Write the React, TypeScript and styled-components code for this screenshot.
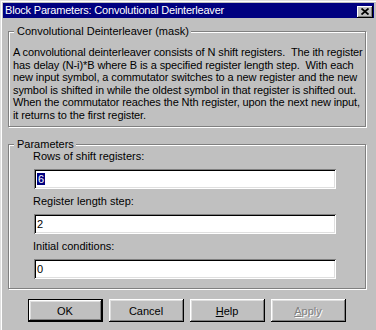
import styled, { createGlobalStyle } from "styled-components";

const GlobalStyle = createGlobalStyle`
  html, body {
    margin: 0;
    padding: 0;
    background: #c0c0c0;
  }
  * {
    box-sizing: border-box;
  }
`;

const description = [
  "A convolutional deinterleaver consists of N shift registers.  The ith register",
  "has delay (N-i)*B where B is a specified register length step.  With each",
  "new input symbol, a commutator switches to a new register and the new",
  "symbol is shifted in while the oldest symbol in that register is shifted out.",
  "When the commutator reaches the Nth register, upon the next new input,",
  "it returns to the first register."
];

export default function App() {
  return (
    <>
      <GlobalStyle />
      <Window>
        <TitleBar>
          <TitleText>Block Parameters: Convolutional Deinterleaver</TitleText>
          <CloseButton aria-label="Close">
            <svg width="8" height="7" viewBox="0 0 8 7">
              <path
                d="M0.5 0.5 L7.5 6.5 M7.5 0.5 L0.5 6.5"
                stroke="#000"
                strokeWidth="1.8"
                fill="none"
              />
            </svg>
          </CloseButton>
        </TitleBar>

        <Body>
          <GroupBox $top={7}>
            <Legend>Convolutional Deinterleaver (mask)</Legend>
            <Description>
              {description.map((line) => (
                <Line key={line}>{line}</Line>
              ))}
            </Description>
          </GroupBox>

          <GroupBox $top={11}>
            <Legend>Parameters</Legend>
            <ParamList>
              <Label>Rows of shift registers:</Label>
              <Edit>
                <Selected>6</Selected>
              </Edit>
              <Label>Register length step:</Label>
              <Edit>2</Edit>
              <Label>Initial conditions:</Label>
              <Edit>0</Edit>
            </ParamList>
          </GroupBox>

          <ButtonRow>
            <Button $default>OK</Button>
            <Button>Cancel</Button>
            <Button>
              <u>H</u>elp
            </Button>
            <Button disabled>
              <u>A</u>pply
            </Button>
          </ButtonRow>
        </Body>
      </Window>
    </>
  );
}

const Window = styled.div`
  width: 376px;
  height: 330px;
  padding: 3px 2px 0 3px;
  background: #c0c0c0;
  box-shadow: inset 1px 1px 0 #dfdfdf, inset 2px 2px 0 #ffffff;
  font-family: "Liberation Sans", Arial, sans-serif;
  font-size: 11px;
  color: #000;
  display: flex;
  flex-direction: column;
  overflow: hidden;
`;

const TitleBar = styled.div`
  height: 15px;
  flex-shrink: 0;
  background: #000080;
  color: #fff;
  display: flex;
  align-items: center;
  justify-content: space-between;
  padding: 0 1px 0 2px;
`;

const TitleText = styled.span`
  font-size: 11px;
  letter-spacing: -0.2px;
  line-height: 15px;
  white-space: nowrap;
`;

const CloseButton = styled.button`
  width: 16px;
  height: 12px;
  margin-top: 2px;
  padding: 0;
  border: none;
  background: #c0c0c0;
  box-shadow: inset -1px -1px 0 #000, inset 1px 1px 0 #fff,
    inset -2px -2px 0 #808080;
  display: flex;
  align-items: center;
  justify-content: center;
`;

const Body = styled.div`
  padding: 0 8px 0 5px;
  display: flex;
  flex-direction: column;
`;

const GroupBox = styled.fieldset<{ $top: number }>`
  margin: ${(p) => p.$top}px 0 0 0;
  padding: 0;
  min-width: 0;
  border: 1px solid #808080;
  box-shadow: inset 1px 1px 0 #fff, 1px 1px 0 #fff;
`;

const Legend = styled.legend`
  margin-left: 5px;
  padding: 0 2px 0 3px;
  line-height: 13px;
  background: #c0c0c0;
  white-space: nowrap;
`;

const Description = styled.div`
  padding: 8px 4px 5px 4px;
  letter-spacing: -0.1px;
`;

const Line = styled.div`
  white-space: pre;
  line-height: 12.5px;
`;

const ParamList = styled.div`
  margin-top: -1px;
  padding: 0 0 9px 24px;
  display: flex;
  flex-direction: column;
`;

const Label = styled.div`
  line-height: 13px;
  margin: 6px 0;
  &:first-child {
    margin-top: 0;
  }
`;

const Edit = styled.div`
  width: 302px;
  height: 20px;
  margin-left: 1px;
  padding: 0 3px;
  background: #fff;
  line-height: 20px;
  box-shadow: inset 1px 1px 0 #808080, inset -1px -1px 0 #fff,
    inset 2px 2px 0 #000, inset -2px -2px 0 #dfdfdf;
`;

const Selected = styled.span`
  background: #000080;
  color: #fff;
  padding: 0 1px;
`;

const ButtonRow = styled.div`
  margin-top: 10px;
  display: flex;
  justify-content: center;
  gap: 6px;
  padding-right: 1px;
`;

const Button = styled.button<{ $default?: boolean }>`
  width: 75px;
  height: 23px;
  padding: 0;
  border: ${(p) => (p.$default ? "1px solid #000" : "none")};
  background: #c0c0c0;
  font-family: "Liberation Sans", Arial, sans-serif;
  font-size: 11px;
  color: #000;
  box-shadow: inset -1px -1px 0 #000, inset 1px 1px 0 #fff,
    inset -2px -2px 0 #808080, inset 2px 2px 0 #dfdfdf;
  &:disabled {
    color: #808080;
    text-shadow: 1px 1px 0 #fff;
  }
`;
